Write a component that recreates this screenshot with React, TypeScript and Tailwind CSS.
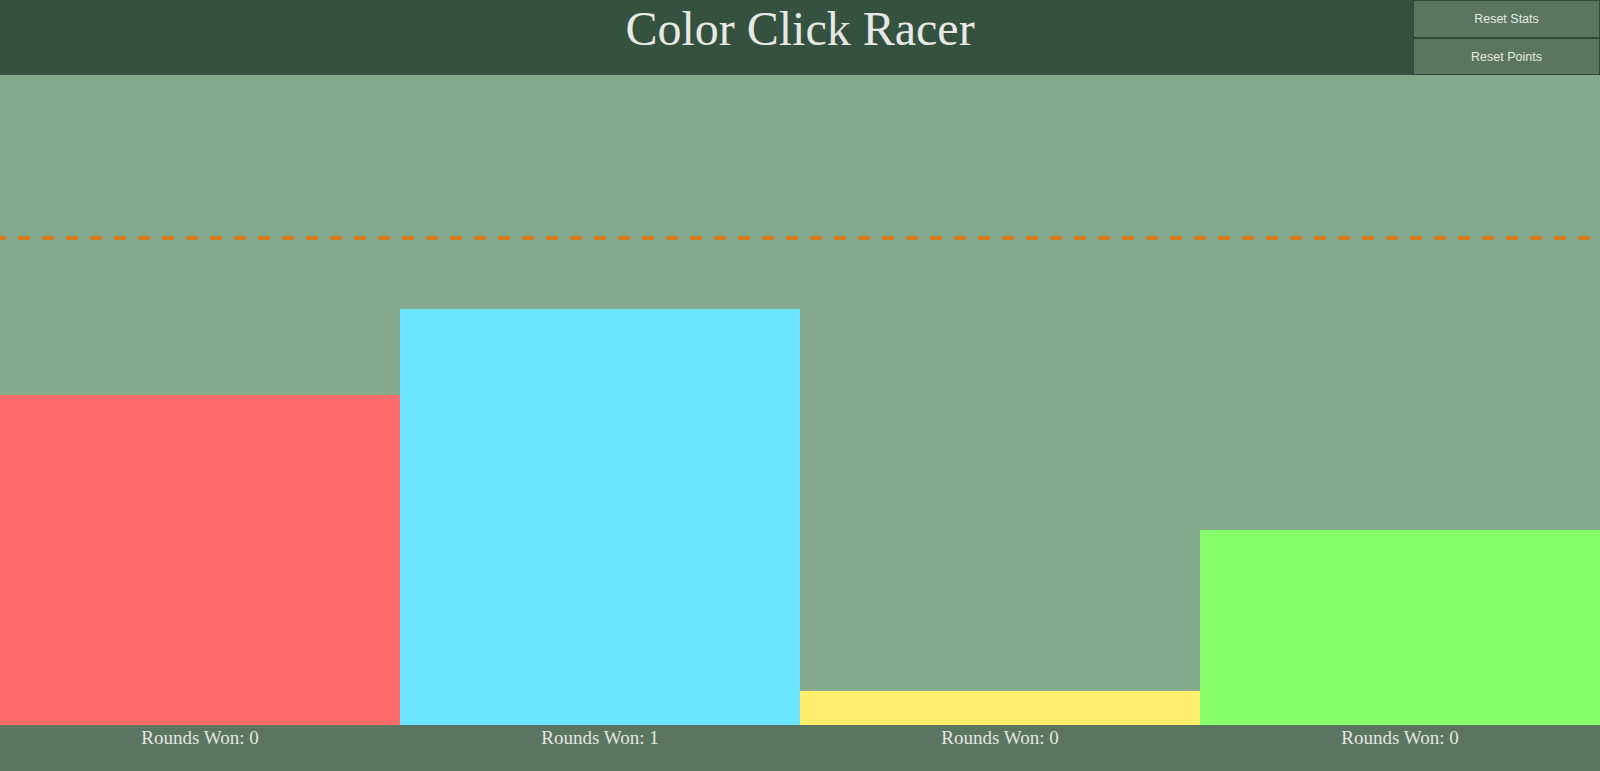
import React from "react";

const racers = [
  { color: "#ff6b6b", height: 330, wins: 0 },
  { color: "#6be5ff", height: 416, wins: 1 },
  { color: "#ffee6b", height: 34, wins: 0 },
  { color: "#87ff6b", height: 195, wins: 0 },
];

export default function App() {
  return (
    <div className="flex h-screen w-full flex-col overflow-hidden bg-[#85a98c]">
      <header className="grid h-[75px] shrink-0 grid-cols-[1fr_auto_1fr] bg-[#355240]">
        <div />
        <h1 className="m-0 -mt-[7px] self-start text-[48px] font-normal leading-normal text-[#e8e8e6] [font-family:'Liberation_Serif',serif]">
          Color Click Racer
        </h1>
        <div className="flex justify-end">
          <div className="flex w-[187px] flex-col">
            <button className="flex-1 border border-[#2f4a39] bg-[#5b7560] pt-[2px] text-[12.5px] text-[#e4ebe4] [font-family:'Liberation_Sans',sans-serif]">
              Reset Stats
            </button>
            <button className="flex-1 border border-[#2f4a39] bg-[#5b7560] pt-[2px] text-[12.5px] text-[#e4ebe4] [font-family:'Liberation_Sans',sans-serif]">
              Reset Points
            </button>
          </div>
        </div>
      </header>
      <main className="relative grid flex-1 grid-cols-4 items-end">
        <div className="absolute left-0 right-0 top-[161px] h-[4px] bg-[repeating-linear-gradient(90deg,#d57d1f_0px,#d57d1f_6px,transparent_6px,transparent_18px,#d57d1f_18px,#d57d1f_24px)]" />
        {racers.map((r, i) => (
          <div key={i} className="w-full" style={{ height: r.height, backgroundColor: r.color }} />
        ))}
      </main>
      <footer className="grid h-[46px] shrink-0 grid-cols-4 bg-[#5c7560]">
        {racers.map((r, i) => (
          <div key={i} className="-mt-[1px] text-center text-[19px] leading-normal text-[#e2e8e2] [font-family:'Liberation_Serif',serif]">
            Rounds Won: {r.wins}
          </div>
        ))}
      </footer>
    </div>
  );
}
